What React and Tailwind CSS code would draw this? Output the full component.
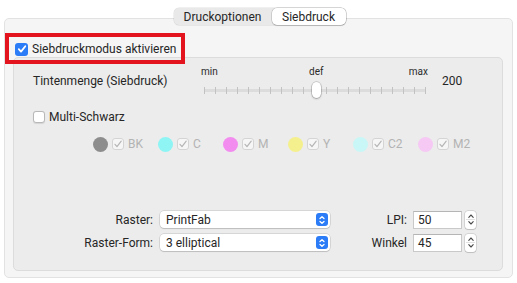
import React from "react";

const font = { fontFamily: "Roboto, 'Liberation Sans', sans-serif" };

function Check({ checked, disabled, blue }) {
  if (blue) {
    return (
      <div className="w-[13px] h-[13px] rounded-[3px] bg-[#2b7cf6] flex items-center justify-center">
        <svg width="10" height="10" viewBox="0 0 10 10">
          <path d="M1.8 5.2 L4 7.6 L8.3 2.3" fill="none" stroke="white" strokeWidth="1.8" strokeLinecap="round" strokeLinejoin="round" />
        </svg>
      </div>
    );
  }
  return (
    <div
      className={
        "w-[12px] h-[12px] rounded-[3px] border flex items-center justify-center " +
        (disabled ? "bg-[#f6f6f6] border-[#d4d4d4]" : "bg-white border-[#b8b8b8] shadow-[0_0.5px_1px_rgba(0,0,0,0.1)]")
      }
    >
      {checked && (
        <svg width="10" height="10" viewBox="0 0 10 10">
          <path d="M2 5.3 L4 7.6 L8.2 2.2" fill="none" stroke="#b5b5b5" strokeWidth="1.2" strokeLinecap="round" strokeLinejoin="round" />
        </svg>
      )}
    </div>
  );
}

function Ink({ color, label }) {
  return (
    <div className="w-[65px] flex items-center">
      <div className="w-[15px] h-[15px] rounded-full" style={{ backgroundColor: color }} />
      <div className="ml-[4px]">
        <Check checked disabled />
      </div>
      <span className="ml-[4px] text-[12px] leading-[16px] text-[#b3b3b3]">{label}</span>
    </div>
  );
}

function SelectBox({ value }) {
  return (
    <div className="w-[170px] h-[17px] rounded-[4px] bg-white shadow-[0_0_0_0.5px_rgba(0,0,0,0.18),0_1px_1px_rgba(0,0,0,0.12)] flex items-center justify-between pl-[6px] pr-[2px]">
      <span className="text-[12px] leading-[16px] text-[#262626]">{value}</span>
      <div className="w-[12px] h-[13px] rounded-[3px] bg-[#2b7cf6] flex items-center justify-center">
        <svg width="8" height="10" viewBox="0 0 8 10">
          <path d="M2 3.6 L4 1.8 L6 3.6 M2 6.4 L4 8.2 L6 6.4" fill="none" stroke="white" strokeWidth="1.3" strokeLinecap="round" strokeLinejoin="round" />
        </svg>
      </div>
    </div>
  );
}

function NumField({ value }) {
  return (
    <div className="flex items-center">
      <div className="w-[49px] h-[18px] bg-white border border-[#c9c9c9] border-t-[#b5b5b5] flex items-center pl-[4px]">
        <span className="text-[12px] leading-[16px] text-[#262626]">{value}</span>
      </div>
      <div className="ml-[3px] w-[11px] h-[18px] rounded-[3px] bg-white shadow-[0_0_0_0.5px_rgba(0,0,0,0.2),0_1px_1px_rgba(0,0,0,0.1)] flex flex-col items-center justify-center">
        <svg width="8" height="6" viewBox="0 0 8 6">
          <path d="M1.8 4.3 L4 2 L6.2 4.3" fill="none" stroke="#4a4a4a" strokeWidth="1.1" strokeLinecap="round" strokeLinejoin="round" />
        </svg>
        <div className="w-[9px] h-px bg-[#e2e2e2]" />
        <svg width="8" height="6" viewBox="0 0 8 6">
          <path d="M1.8 1.7 L4 4 L6.2 1.7" fill="none" stroke="#4a4a4a" strokeWidth="1.1" strokeLinecap="round" strokeLinejoin="round" />
        </svg>
      </div>
    </div>
  );
}

function Slider() {
  const ticks = Array.from({ length: 21 });
  return (
    <div className="w-[228px] flex flex-col">
      <div className="relative h-[12px] text-[10px] leading-[12px] text-[#2a2a2a]">
        <span className="absolute left-0 top-0">min</span>
        <span className="absolute left-[108px] top-0">def</span>
        <span className="absolute right-[1px] top-0">max</span>
      </div>
      <div className="relative mt-[4px] h-[16px] flex items-center px-[3px]">
        <div className="absolute left-[3px] right-[3px] top-[7px] h-[3px] rounded-full bg-[#dcdcdc]" />
        <div className="relative w-full flex justify-between items-center">
          {ticks.map((_, i) => (
            <div key={i} className="w-px h-[7px] bg-[#c2c2c2]" />
          ))}
        </div>
        <div className="absolute left-[111px] top-0 w-[9px] h-[16px] rounded-full bg-white shadow-[0_0_0_0.5px_rgba(0,0,0,0.25),0_1px_2px_rgba(0,0,0,0.25)]" />
      </div>
    </div>
  );
}

export default function App() {
  return (
    <div className="w-[517px] h-[283px] bg-white px-[4px] pt-[8px] overflow-hidden" style={font}>
      <div className="relative z-10 flex justify-center pl-[2px]">
        <div className="h-[17px] flex items-center rounded-[5px] bg-[#e9e9e9] shadow-[0_0_0_0.5px_rgba(0,0,0,0.12)] text-[12px] leading-[16px] text-[#262626]">
          <div className="w-[98px] h-[17px] flex items-center justify-center">Druckoptionen</div>
          <div className="w-[74px] h-[17px] flex items-center justify-center rounded-[5px] bg-white shadow-[0_0_0_0.5px_rgba(0,0,0,0.22),0_1px_1px_rgba(0,0,0,0.12)]">
            Siebdruck
          </div>
        </div>
      </div>
      <div className="relative -mt-[7px] w-[509px] h-[260px] rounded-[5px] bg-[#f5f5f5] border border-[#e2e2e2] pt-[22px] pl-[8px]">
        <div className="h-[16px] flex items-center pl-[2px]">
          <Check blue />
          <span className="ml-[4px] text-[12px] leading-[16px] text-[#262626]">Siebdruckmodus aktivieren</span>
        </div>
        <div className="w-[490px] h-[214px] rounded-[5px] bg-[#ececec] border border-[#dcdcdc] flex flex-col">
          <div className="flex items-start pt-[8px]">
            <div className="w-[187px] pl-[19px] mt-[7px] text-[12px] leading-[16px] text-[#262626]">Tintenmenge (Siebdruck)</div>
            <Slider />
            <div className="ml-[13px] mt-[7px] text-[12px] leading-[16px] text-[#262626]">200</div>
          </div>
          <div className="mt-[11px] h-[16px] flex items-center pl-[19px]">
            <Check />
            <span className="ml-[4px] text-[12px] leading-[16px] text-[#262626]">Multi-Schwarz</span>
          </div>
          <div className="mt-[11px] h-[16px] flex items-center pl-[79px]">
            <Ink color="#8d8d8d" label="BK" />
            <Ink color="#8ef4f4" label="C" />
            <Ink color="#f28cef" label="M" />
            <Ink color="#f4f08e" label="Y" />
            <Ink color="#c9f6f6" label="C2" />
            <Ink color="#f5c9f3" label="M2" />
          </div>
          <div className="mt-[59px] h-[17px] flex items-center">
            <div className="w-[139px] text-right text-[12px] leading-[16px] text-[#262626]">Raster:</div>
            <div className="ml-[7px]"><SelectBox value="PrintFab" /></div>
            <div className="w-[77px] text-right text-[12px] leading-[16px] text-[#262626]">LPI:</div>
            <div className="ml-[6px]"><NumField value="50" /></div>
          </div>
          <div className="mt-[6px] h-[17px] flex items-center">
            <div className="w-[139px] text-right text-[12px] leading-[16px] text-[#262626]">Raster-Form:</div>
            <div className="ml-[7px]"><SelectBox value="3 elliptical" /></div>
            <div className="w-[77px] text-right text-[12px] leading-[16px] text-[#262626]">Winkel</div>
            <div className="ml-[6px]"><NumField value="45" /></div>
          </div>
        </div>
        <div className="absolute left-[0px] top-[14px] w-[180px] h-[31px] border-[4px] border-[#e3141d] pointer-events-none" />
      </div>
    </div>
  );
}
